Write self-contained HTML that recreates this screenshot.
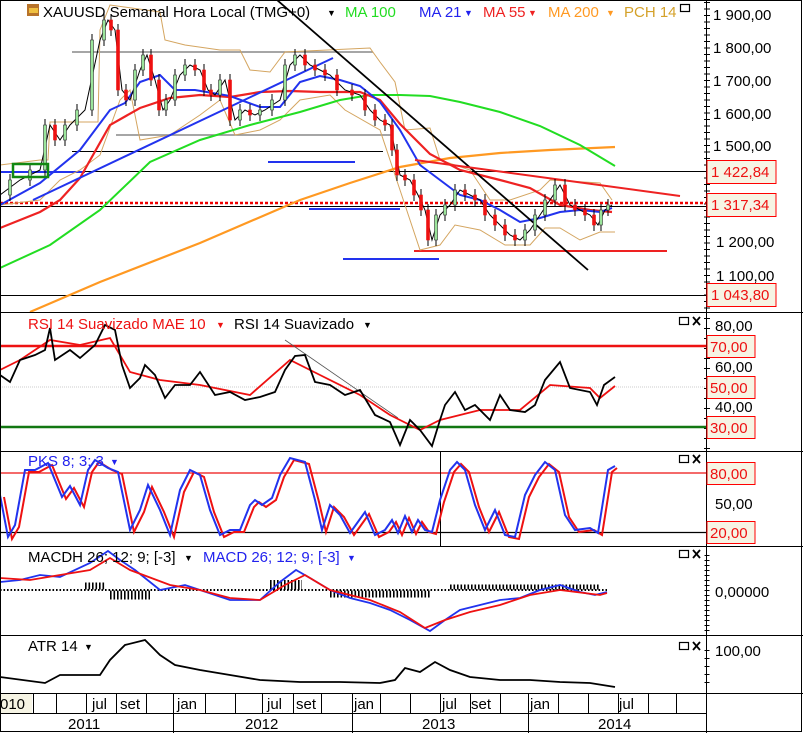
<!DOCTYPE html>
<html><head><meta charset="utf-8"><style>
html,body{margin:0;padding:0;background:#fff;}
svg{display:block;font-family:"Liberation Sans",sans-serif;}
</style></head><body>
<svg width="803" height="733" viewBox="0 0 803 733" xmlns="http://www.w3.org/2000/svg">
<rect x="0" y="0" width="803" height="733" fill="#fff"/>
<!-- axis ticks -->
<line x1="707" y1="2" x2="707" y2="310" stroke="#000" stroke-width="6" stroke-dasharray="1,5.5"/>
<line x1="707" y1="318" x2="707" y2="450" stroke="#000" stroke-width="6" stroke-dasharray="1,9"/>
<line x1="707" y1="555" x2="707" y2="633" stroke="#000" stroke-width="5" stroke-dasharray="1,4"/>
<line x1="707" y1="650" x2="707" y2="690" stroke="#000" stroke-width="5" stroke-dasharray="1,7"/>
<!-- main horizontals -->
<g fill="none">
<line x1="0" y1="171.5" x2="706" y2="171.5" stroke="#000"/>
<line x1="0" y1="206.5" x2="706" y2="206.5" stroke="#000"/>
<line x1="0" y1="295.5" x2="706" y2="295.5" stroke="#000"/>
<line x1="0" y1="203" x2="706" y2="203" stroke="#e00" stroke-width="2.5" stroke-dasharray="3,2"/>
<line x1="72" y1="52" x2="373" y2="52" stroke="#888" stroke-width="1.5"/>
<line x1="116" y1="135" x2="392" y2="135" stroke="#888" stroke-width="1.5"/>
<line x1="72" y1="151.5" x2="383" y2="151.5" stroke="#000"/>
<line x1="268" y1="162" x2="355" y2="162" stroke="#2233ee" stroke-width="2"/>
<line x1="309" y1="209" x2="400" y2="209" stroke="#2233ee" stroke-width="2"/>
<line x1="343" y1="259" x2="439" y2="259" stroke="#2233ee" stroke-width="2"/>
<line x1="414" y1="251" x2="667" y2="251" stroke="#ee2222" stroke-width="2"/>
<line x1="0" y1="172" x2="85" y2="172" stroke="#2233ee" stroke-width="2"/>
<!-- PCH -->
<polyline stroke="#d4a560" stroke-width="1" points="0,165 40,160 48,160 50,122 98,122 100,30 110,5 160,12 165,40 185,45 220,50 240,50 250,70 270,72 285,52 370,48 380,62 395,82 405,130 430,128 440,160 470,170 490,200 510,200 540,190 550,180 600,183 612,200"/>
<polyline stroke="#d4a560" stroke-width="1" points="0,205 40,200 60,180 80,170 100,155 120,100 130,90 140,140 170,135 200,115 220,100 235,135 260,130 280,120 300,100 330,95 345,110 380,130 400,190 420,250 440,245 455,225 480,230 505,245 530,245 545,228 560,228 580,240 600,232 615,232"/>
<!-- MAs -->
<polyline stroke="#ff9922" stroke-width="2.2" points="30,312 100,282 200,243 300,200 350,183 400,167 450,158 500,153 550,150 615,147"/>
<polyline stroke="#22dd22" stroke-width="2" points="0,268 50,245 100,210 150,162 200,140 250,125 300,112 340,100 370,95 400,95 430,96 460,102 500,112 540,126 580,145 615,166"/>
<polyline stroke="#ee2222" stroke-width="2.2" points="0,228 40,212 60,200 80,178 110,125 140,108 170,98 200,95 230,97 260,92 290,91 320,92 360,92 380,100 400,124 430,154 460,170 500,180 530,188 560,205 590,210 612,212"/>
<polyline stroke="#2233ee" stroke-width="2" points="0,205 40,183 80,150 110,110 125,103 140,82 160,75 175,90 195,90 230,96 260,107 280,107 300,82 320,76 340,80 360,86 380,102 400,130 420,165 440,180 460,195 480,200 500,210 520,222 540,218 560,212 580,210 600,212 612,208"/>
<line x1="33" y1="200" x2="333" y2="58" stroke="#2233ee" stroke-width="2"/>
<line x1="277" y1="0" x2="588" y2="270" stroke="#000" stroke-width="1.8"/>
<line x1="415" y1="160" x2="680" y2="196" stroke="#ee2222" stroke-width="2"/>
<!-- price -->
<polyline stroke="#000" stroke-width="1" points="0,195 20,180 40,170 50,125 60,140 70,125 85,110 100,40 108,20 115,30 122,90 130,100 140,70 147,55 155,80 163,110 170,100 180,75 190,65 200,70 208,90 215,95 225,80 235,120 245,110 255,115 265,110 280,100 290,65 300,55 310,65 320,70 330,75 345,90 360,95 370,110 380,120 390,125 395,150 400,175 410,180 418,195 425,210 432,240 440,215 450,205 460,190 470,195 480,200 490,215 500,225 510,235 520,240 530,230 540,215 550,200 560,185 570,205 580,210 590,215 598,225 605,210 612,205"/>
</g>
<path stroke="#000" stroke-width="1" d="M10 174V201M30 164V186M45 119V176M55 119V146M65 119V146M77 104V131M92 34V116M104 14V46M111 14V36M118 24V96M126 84V106M135 64V106M143 49V76M151 49V86M159 74V116M166 94V116M175 69V106M185 59V81M195 59V76M204 64V96M211 84V101M220 74V101M230 74V126M240 104V126M250 104V121M260 104V121M272 94V116M285 59V106M295 49V71M305 49V71M315 59V76M325 64V81M337 69V96M352 84V101M365 89V116M375 104V126M385 114V131M392 119V156M397 144V181M405 169V186M414 174V201M421 189V216M428 204V246M436 209V246M445 199V221M455 184V211M465 184V201M475 189V206M485 194V221M495 209V231M505 219V241M515 229V246M525 224V246M535 209V236M545 194V221M555 179V206M565 179V211M575 199V216M585 204V221M594 209V231M601 204V231M608 199V216"/>
<g stroke-width="0.6">
<g fill="#9be59b" stroke="#333">
<rect x="8.5" y="180" width="3" height="15"/><rect x="28.5" y="170" width="3" height="10"/><rect x="43.5" y="125" width="3" height="45"/><rect x="63.5" y="125" width="3" height="15"/><rect x="75.5" y="110" width="3" height="15"/><rect x="90.5" y="40" width="3" height="70"/><rect x="102.5" y="20" width="3" height="20"/><rect x="133.5" y="70" width="3" height="30"/><rect x="141.5" y="55" width="3" height="15"/><rect x="164.5" y="100" width="3" height="10"/><rect x="173.5" y="75" width="3" height="25"/><rect x="183.5" y="65" width="3" height="10"/><rect x="218.5" y="80" width="3" height="15"/><rect x="238.5" y="110" width="3" height="10"/><rect x="258.5" y="110" width="3" height="5"/><rect x="270.5" y="100" width="3" height="10"/><rect x="283.5" y="65" width="3" height="35"/><rect x="293.5" y="55" width="3" height="10"/><rect x="434.5" y="215" width="3" height="25"/><rect x="443.5" y="205" width="3" height="10"/><rect x="453.5" y="190" width="3" height="15"/><rect x="523.5" y="230" width="3" height="10"/><rect x="533.5" y="215" width="3" height="15"/><rect x="543.5" y="200" width="3" height="15"/><rect x="553.5" y="185" width="3" height="15"/><rect x="599.5" y="210" width="3" height="15"/><rect x="606.5" y="205" width="3" height="5"/>
</g>
<g fill="#ee1111" stroke="#ee1111">
<rect x="53.5" y="125" width="3" height="15"/><rect x="109.5" y="20" width="3" height="10"/><rect x="116.5" y="30" width="3" height="60"/><rect x="124.5" y="90" width="3" height="10"/><rect x="149.5" y="55" width="3" height="25"/><rect x="157.5" y="80" width="3" height="30"/><rect x="193.5" y="65" width="3" height="5"/><rect x="202.5" y="70" width="3" height="20"/><rect x="209.5" y="90" width="3" height="5"/><rect x="228.5" y="80" width="3" height="40"/><rect x="248.5" y="110" width="3" height="5"/><rect x="303.5" y="55" width="3" height="10"/><rect x="313.5" y="65" width="3" height="5"/><rect x="323.5" y="70" width="3" height="5"/><rect x="335.5" y="75" width="3" height="15"/><rect x="350.5" y="90" width="3" height="5"/><rect x="363.5" y="95" width="3" height="15"/><rect x="373.5" y="110" width="3" height="10"/><rect x="383.5" y="120" width="3" height="5"/><rect x="390.5" y="125" width="3" height="25"/><rect x="395.5" y="150" width="3" height="25"/><rect x="403.5" y="175" width="3" height="5"/><rect x="412.5" y="180" width="3" height="15"/><rect x="419.5" y="195" width="3" height="15"/><rect x="426.5" y="210" width="3" height="30"/><rect x="463.5" y="190" width="3" height="5"/><rect x="473.5" y="195" width="3" height="5"/><rect x="483.5" y="200" width="3" height="15"/><rect x="493.5" y="215" width="3" height="10"/><rect x="503.5" y="225" width="3" height="10"/><rect x="513.5" y="235" width="3" height="5"/><rect x="563.5" y="185" width="3" height="20"/><rect x="573.5" y="205" width="3" height="5"/><rect x="583.5" y="210" width="3" height="5"/><rect x="592.5" y="215" width="3" height="10"/>
</g></g>
<rect x="13" y="164" width="35" height="13" fill="none" stroke="#118811" stroke-width="2.5"/>
<!-- RSI -->
<g fill="none">
<line x1="0" y1="346" x2="706" y2="346" stroke="#ee1111" stroke-width="2.5"/>
<line x1="0" y1="427" x2="706" y2="427" stroke="#117711" stroke-width="2.5"/>
<line x1="0" y1="387" x2="706" y2="387" stroke="#ccc" stroke-dasharray="1,1"/>
<line x1="285" y1="340" x2="398" y2="418" stroke="#555" stroke-width="0.8"/>
<polyline stroke="#ee1111" stroke-width="1.8" points="0,370 20,360 50,340 80,345 110,338 130,372 160,380 200,385 250,395 290,360 320,375 360,395 390,415 420,430 440,420 480,410 520,410 550,385 590,388 600,398 615,386"/>
<polyline stroke="#000" stroke-width="1.8" points="0,375 10,382 20,360 35,355 45,350 50,328 55,360 70,350 80,358 95,345 105,325 115,330 122,365 130,388 140,378 145,365 155,375 165,398 175,385 190,385 200,372 215,395 230,392 245,400 260,397 275,392 285,370 295,356 305,355 315,382 330,385 345,395 360,390 375,415 390,422 400,445 410,420 420,430 432,446 440,420 445,405 455,392 465,410 475,405 490,420 500,395 510,410 525,412 535,405 545,380 560,362 570,388 590,392 597,405 604,385 615,377"/>
<!-- PKS -->
<line x1="0" y1="473" x2="706" y2="473" stroke="#ee1111" stroke-width="1.2"/>
<line x1="0" y1="532.5" x2="706" y2="532.5" stroke="#000" stroke-width="1.2"/>
<line x1="440.5" y1="452" x2="440.5" y2="546" stroke="#000"/>
<polyline stroke="#ee1111" stroke-width="2" points="4,497 12,539 19,527 29,472 39,472 52,465 59,482 66,499 74,488 84,507 92,472 99,462 112,470 122,474 134,532 144,512 152,487 164,512 174,537 184,492 194,472 204,477 214,512 224,537 234,532 244,532 254,507 259,502 266,507 276,500 284,477 294,460 309,464 319,502 326,532 334,507 344,517 354,535 369,514 379,537 389,532 396,522 402,535 409,518 416,534 422,522 429,532 436,534 444,502 454,472 461,464 469,472 479,507 489,532 499,512 509,537 519,539 529,497 539,477 549,464 559,472 569,517 579,532 594,530 602,535 612,472 617,468"/>
<polyline stroke="#2233ee" stroke-width="2" points="0,495 8,537 15,525 25,470 35,470 48,463 55,480 62,497 70,486 80,505 88,470 95,460 108,468 118,472 130,530 140,510 148,485 160,510 170,535 180,490 190,470 200,475 210,510 220,535 230,530 240,530 250,505 255,500 262,505 272,498 280,475 290,458 305,462 315,500 322,530 330,505 340,515 350,533 365,512 375,535 385,530 392,520 398,533 405,516 412,532 418,520 425,530 432,532 440,500 450,470 457,462 465,470 475,505 485,530 495,510 505,535 515,537 525,495 535,475 545,462 555,470 565,515 575,530 590,528 598,533 608,470 615,466"/>
<!-- MACD hist -->
<g stroke="#000" stroke-dasharray="1.6,1.9">
<line x1="0" y1="590" x2="607" y2="590" stroke-width="2"/>
<line x1="85" y1="586" x2="106" y2="586" stroke-width="7"/>
<line x1="110" y1="595" x2="150" y2="595" stroke-width="9"/>
<line x1="270" y1="585" x2="302" y2="585" stroke-width="10"/>
<line x1="330" y1="594" x2="430" y2="594" stroke-width="7"/>
<line x1="450" y1="587" x2="600" y2="587" stroke-width="5"/>
</g>
<polyline stroke="#2233ee" stroke-width="1.8" points="0,582 20,580 40,575 60,577 90,563 108,551 120,560 135,570 160,590 185,585 200,590 230,600 260,600 280,582 296,570 310,578 330,590 350,598 370,603 390,610 410,620 430,631 445,620 460,610 480,605 500,600 520,598 540,590 560,585 580,592 595,595 607,592"/>
<polyline stroke="#ee1111" stroke-width="1.8" points="0,578 30,580 60,575 90,570 110,558 130,570 170,585 200,590 230,598 260,600 285,585 305,575 330,590 370,600 400,612 425,628 445,620 470,612 500,605 530,595 560,590 600,595 607,593"/>
<!-- ATR -->
<polyline stroke="#000" stroke-width="1.8" points="0,677 45,683 60,675 100,675 110,660 125,645 145,640 160,655 175,665 200,670 230,675 260,680 300,682 340,682 380,683 395,680 405,668 420,672 435,662 450,670 470,677 500,680 530,680 560,682 590,683 615,687"/>
</g>
<!-- Frames -->
<g stroke="#000" stroke-width="1" fill="none">
<rect x="0.5" y="0.5" width="801" height="731"/>
<line x1="706.5" y1="0" x2="706.5" y2="733"/>
<line x1="0" y1="312.5" x2="803" y2="312.5"/>
<line x1="0" y1="451.5" x2="803" y2="451.5"/>
<line x1="0" y1="546.5" x2="803" y2="546.5"/>
<line x1="0" y1="635.5" x2="803" y2="635.5"/>
<line x1="0" y1="693.5" x2="803" y2="693.5"/>
<line x1="0" y1="713.5" x2="706" y2="713.5"/>
<path d="M33.5 694V713M56.5 694V713M86.5 694V713M116.5 694V713M146.5 694V713M173.5 694V733M205.5 694V713M235.5 694V713M262.5 694V713M293.5 694V713M321.5 694V713M352.5 694V733M380.5 694V713M410.5 694V713M440.5 694V713M470.5 694V713M500.5 694V713M528.5 694V733M558.5 694V713M588.5 694V713M618.5 694V713M648.5 694V713M676.5 694V713"/>
</g>
<!-- titles -->
<g font-size="15">
<rect x="27" y="4" width="12" height="12" fill="#b8732a"/><rect x="29" y="8" width="9" height="5" fill="#f0c040"/>
<text x="43" y="17" fill="#000">XAUUSD Semanal Hora Local (TMG+0)</text>
<text x="327" y="16" fill="#000" font-size="9">▼</text>
<text x="345" y="17" fill="#22dd22">MA 100</text>
<text x="419" y="17" fill="#2222ee">MA 21</text>
<text x="464" y="16" fill="#2222ee" font-size="9">▼</text>
<text x="483" y="17" fill="#ee2222">MA 55</text>
<text x="528" y="16" fill="#ee2222" font-size="9">▼</text>
<text x="548" y="17" fill="#ff9922">MA 200</text>
<text x="606" y="16" fill="#ff9922" font-size="9">▼</text>
<text x="624" y="17" fill="#d4a12a">PCH 14</text>
<rect x="680.5" y="4.5" width="9" height="7" fill="#fff" stroke="#000" stroke-width="1.2"/>
<text x="28" y="329" fill="#ee1111">RSI 14 Suavizado MAE 10</text>
<text x="216" y="328" fill="#ee1111" font-size="9">▼</text>
<text x="234" y="329" fill="#000">RSI 14 Suavizado</text>
<text x="363" y="328" fill="#000" font-size="9">▼</text>
<text x="28" y="466" fill="#2222ee">PKS 8; 3; 3</text>
<text x="110" y="465" fill="#2222ee" font-size="9">▼</text>
<text x="28" y="562" fill="#000">MACDH 26; 12; 9; [-3]</text>
<text x="184" y="561" fill="#000" font-size="9">▼</text>
<text x="203" y="562" fill="#2222ee">MACD 26; 12; 9; [-3]</text>
<text x="347" y="561" fill="#2222ee" font-size="9">▼</text>
<text x="28" y="651" fill="#000">ATR 14</text>
<text x="84" y="650" fill="#000" font-size="9">▼</text>
</g>
<g stroke="#000" fill="#fff" stroke-width="1.2">
<rect x="679.5" y="317.5" width="9" height="7"/><rect x="679.5" y="455.5" width="9" height="7"/><rect x="679.5" y="550.5" width="9" height="7"/><rect x="679.5" y="642.5" width="9" height="7"/>
<path d="M693 317l7 8M700 317l-7 8M693 455l7 8M700 455l-7 8M693 550l7 8M700 550l-7 8M693 642l7 8M700 642l-7 8" stroke-width="1.8"/>
</g>
<g font-size="15" fill="#000">
<text x="713" y="20">1 900,00</text><text x="713" y="53">1 800,00</text><text x="713" y="86">1 700,00</text>
<text x="713" y="119">1 600,00</text><text x="713" y="151">1 500,00</text><text x="716" y="247">1 200,00</text>
<text x="716" y="281">1 100,00</text>
<text x="715" y="331">80,00</text><text x="715" y="372">60,00</text><text x="715" y="412">40,00</text>
<text x="715" y="509">50,00</text><text x="715" y="597">0,00000</text><text x="715" y="656">100,00</text>
</g>
<g font-size="15" fill="#ee1111">
<rect x="707" y="160.5" width="69" height="23" fill="#f6f4e4" stroke="#f00"/><text x="711" y="177">1 422,84</text>
<rect x="707" y="193.5" width="69" height="23" fill="#f6f4e4" stroke="#f00"/><text x="711" y="210">1 317,34</text>
<rect x="707" y="283.5" width="69" height="23" fill="#f6f4e4" stroke="#f00"/><text x="711" y="300">1 043,80</text>
<rect x="707" y="335.5" width="48" height="22" fill="#f6f4e4" stroke="#f00"/><text x="710" y="352">70,00</text>
<rect x="707" y="376.5" width="48" height="22" fill="#f6f4e4" stroke="#f00"/><text x="710" y="393">50,00</text>
<rect x="707" y="416.5" width="48" height="22" fill="#f6f4e4" stroke="#f00"/><text x="710" y="433">30,00</text>
<rect x="707" y="462.5" width="48" height="22" fill="#f6f4e4" stroke="#f00"/><text x="710" y="479">80,00</text>
<rect x="707" y="521.5" width="48" height="22" fill="#f6f4e4" stroke="#f00"/><text x="710" y="538">20,00</text>
</g>
<rect x="1" y="694" width="31" height="19" fill="#f6f4e4"/>
<g font-size="15" fill="#000">
<text x="0" y="709">010</text><text x="92" y="709">jul</text><text x="120" y="709">set</text>
<text x="177" y="709">jan</text><text x="267" y="709">jul</text><text x="296" y="709">set</text>
<text x="354" y="709">jan</text><text x="442" y="709">jul</text><text x="471" y="709">set</text>
<text x="530" y="709">jan</text><text x="619" y="709">jul</text>
<text x="68" y="729">2011</text><text x="245" y="729">2012</text><text x="422" y="729">2013</text><text x="598" y="729">2014</text>
</g>
</svg>
</body></html>
